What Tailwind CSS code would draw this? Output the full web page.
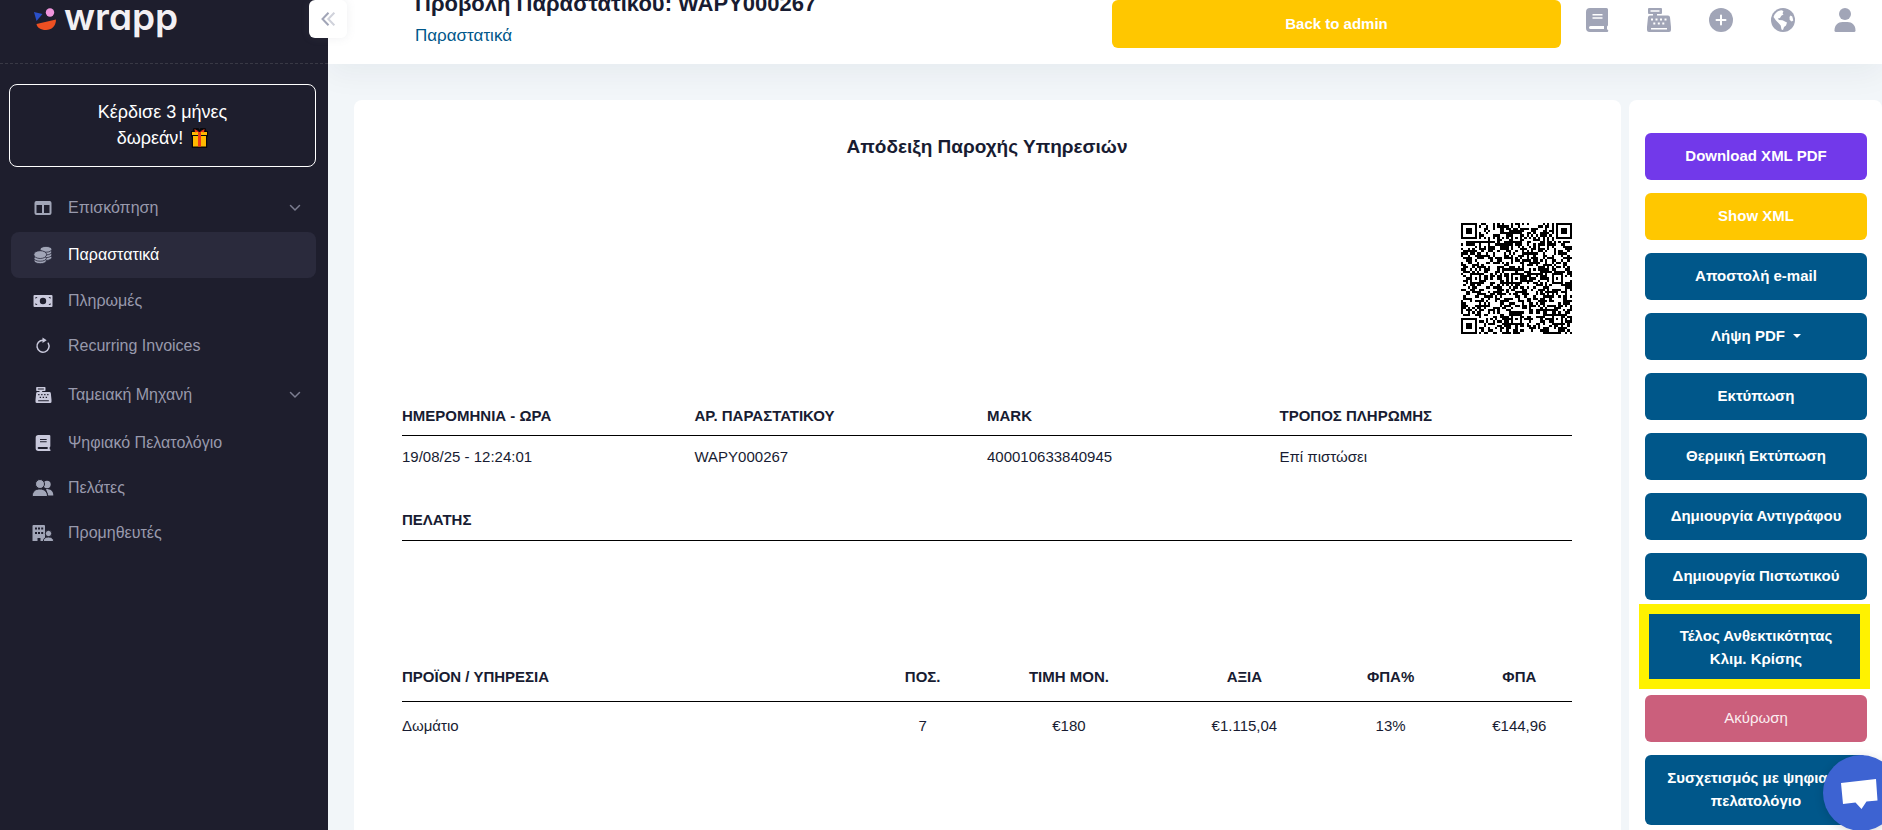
<!DOCTYPE html>
<html lang="el">
<head>
<meta charset="utf-8">
<title>Προβολή Παραστατικού: WAPY000267</title>
<script src="https://cdn.jsdelivr.net/npm/@tailwindcss/browser@4"></script>
</head>
<body class="flex h-screen overflow-hidden bg-[#f2f6f9] font-['Liberation_Sans',Arial,sans-serif] text-[15px] leading-6 text-[#181c32]">

<svg class="hidden" aria-hidden="true">
  <symbol id="book" viewBox="0 0 24 24"><path fill="currentColor" fill-rule="evenodd" d="M5 0h16.500a1.500 1.500 0 0 1 1.500 1.500v15.500a1.500 1.500 0 0 1-1 1.400v3a1.300 1.300 0 0 1 0 2.600H5a4 4 0 0 1-4-4V4a4 4 0 0 1 4-4zM5.500 18a1.500 1.500 0 0 0 0 3H19v-3zM7.500 6v1.500h10V6zm0 3.200v1.500h10V9.200z"/></symbol>
  <symbol id="register" viewBox="0 0 24 24"><path fill="currentColor" fill-rule="evenodd" d="M2 0h12a1 1 0 0 1 1 1v4a1 1 0 0 1-1 1h-4v1.500h11a2 2 0 0 1 2 1.700L24 19v3a2 2 0 0 1-2 2H2a2 2 0 0 1-2-2v-3L1 9.200a2 2 0 0 1 2-1.700h3V6H2a1 1 0 0 1-1-1V1a1 1 0 0 1 1-1zM3.500 2.200v1.600h9V2.200zM4 10.500v2h2v-2zm4.500 0v2h2v-2zm4.500 0v2h2v-2zm4.500 0v2h2v-2zM6.300 14.500v2h2v-2zm4.500 0v2h2v-2zm4.500 0v2h2v-2zM4 20v1.500h16V20z"/></symbol>
  <symbol id="chevron" viewBox="0 0 12 12"><path fill="none" stroke="currentColor" stroke-width="1.500" stroke-linecap="round" d="M1.500 3.500 6 8l4.500-4.500"/></symbol>
</svg>

<aside class="relative z-20 flex w-[328px] shrink-0 flex-col bg-[#1e1e2d]">
  <div class="relative flex h-16 shrink-0 items-start border-b border-dashed border-[#393945] pl-[34px]">
    <a href="#" aria-label="wrapp" class="flex items-start gap-2 text-[#f3f0f3]">
      <svg class="mt-2 h-[22px] w-[22px]" viewBox="0 0 22 22"><path fill="#2b50c8" d="M0 4 8.500 6 2.500 13z"/><circle cx="16" cy="4.500" r="4.200" fill="#f095dd"/><path fill="#ee5022" d="M2.500 16 22 11.500C22 18 17.500 22 12 22S3 19.500 2.500 16z"/></svg>
      <span class="font-['Inter'] text-[37px] font-semibold leading-[34px] [font-feature-settings:'cv11']">wrapp</span>
    </a>
    <button aria-label="Σύμπτυξη μενού" class="absolute -right-[19px] top-0 flex h-[38px] w-[38px] items-center justify-center rounded-md bg-white shadow-[0_0_10px_rgba(113,121,136,.12)]">
      <svg class="h-[14px] w-[14px]" viewBox="0 0 14 14" fill="none" stroke-width="2"><path stroke="#a1a5b7" d="M7.500.7 1.500 7l6 6.300"/><path stroke="#d0d2db" d="M13.300.7 7.300 7l6 6.300"/></svg>
    </button>
  </div>
  <a href="#" class="mt-5 ml-[9px] mr-3 flex h-[83px] shrink-0 flex-col items-center justify-center rounded-lg border border-white pb-[2px] text-[18px] leading-[26px] text-white">
    <span>Κέρδισε 3 μήνες</span>
    <span class="flex items-center gap-2">δωρεάν!
      <svg class="h-5 w-[17px]" viewBox="0 0 17 20" role="img" aria-label="δώρο"><path d="M2.500 0h5l1 2 1-2h5l1 3H17v5l-.8 1V20H.8V9L0 8V3h1.500z" fill="#08080c"/><path fill="#ffb900" d="M1 4h15v3H1zM2 8h13v10.500H2z"/><path fill="#f03a17" d="M7 4h3v14.500H7zM3.500 1 8 3.500 4 4.500zM13.500 1 9 3.500l4 1z"/></svg>
    </span>
  </a>
  <nav class="mt-[18px] ml-[11px] mr-3 flex flex-col text-base text-[#9899ac]">
    <a href="#" class="flex h-[45px] items-center pl-5 pr-[15px]"><svg class="h-6 w-6 text-[#a1a5b7]" viewBox="0 0 24 24"><path fill="currentColor" fill-rule="evenodd" d="M5 5h14a2 2 0 0 1 1.500 2v10a2 2 0 0 1-2 2h-13a2 2 0 0 1-2-2V7A2 2 0 0 1 5 5zm.5 4v8H11V9zm7.500 0v8h5.500V9z"/></svg><span class="ml-[13px] flex-1">Επισκόπηση</span><svg class="h-3 w-3 text-[#7c7d90]"><use href="#chevron"/></svg></a>
    <a href="#" class="mt-[2px] flex h-[46px] items-center rounded-lg bg-[#2a2a3c] pl-5 pr-[15px] text-white"><svg class="h-6 w-6 text-[#a1a5b7]" viewBox="0 0 24 24"><g fill="currentColor" stroke="#2a2a3c" stroke-width=".8"><ellipse cx="15" cy="14.500" rx="5.800" ry="2.900"/><ellipse cx="15" cy="11.700" rx="5.800" ry="2.900"/><ellipse cx="15" cy="9" rx="5.800" ry="2.900"/><ellipse cx="15" cy="6.300" rx="5.800" ry="2.900"/><ellipse cx="9.200" cy="17.800" rx="6.200" ry="2.900"/><ellipse cx="9.200" cy="15.300" rx="6.200" ry="2.900"/><ellipse cx="9.200" cy="11.600" rx="6.400" ry="3.900"/></g></svg><span class="ml-[13px] flex-1">Παραστατικά</span></a>
    <a href="#" class="flex h-[45px] items-center pl-5 pr-[15px]"><svg class="h-6 w-6 text-[#c9c9dc]" viewBox="0 0 24 24"><path fill="currentColor" fill-rule="evenodd" d="M3.500 6h17a1 1 0 0 1 1 1v10a1 1 0 0 1-1 1h-17a1 1 0 0 1-1-1V7a1 1 0 0 1 1-1zM12 8.800a3.200 3.200 0 1 0 0 6.400 3.200 3.200 0 0 0 0-6.400zM4.500 8v2l2-2zm15 0h-2l2 2zm-15 8h2l-2-2zm15 0v-2l-2 2z"/></svg><span class="ml-[13px] flex-1">Πληρωμές</span></a>
    <a href="#" class="flex h-[46px] items-center pl-5 pr-[15px]"><svg class="h-6 w-6 text-[#c9c9dc]" viewBox="0 0 24 24"><path fill="none" stroke="currentColor" stroke-width="1.500" stroke-linecap="round" d="M17.200 9.200a6 6 0 1 1-5.200-3"/><path fill="currentColor" d="m11.500 3.500 4.200 2.800-4.200 2.800z"/></svg><span class="ml-[13px] flex-1">Recurring Invoices</span></a>
    <a href="#" class="mt-[3px] flex h-[45px] items-center pl-5 pr-[15px]"><span class="flex h-6 w-6 items-center justify-center text-[#c9c9dc]"><svg class="h-4 w-[17px]"><use href="#register"/></svg></span><span class="ml-[13px] flex-1">Ταμειακή Μηχανή</span><svg class="h-3 w-3 text-[#7c7d90]"><use href="#chevron"/></svg></a>
    <a href="#" class="mt-[3px] flex h-[45px] items-center pl-5 pr-[15px]"><span class="flex h-6 w-6 items-center justify-center text-[#c9c9dc]"><svg class="h-4 w-4"><use href="#book"/></svg></span><span class="ml-[13px] flex-1">Ψηφιακό Πελατολόγιο</span></a>
    <a href="#" class="flex h-[45px] items-center pl-5 pr-[15px]"><svg class="h-6 w-6 text-[#a1a5b7]" viewBox="0 0 24 24"><g fill="currentColor"><circle cx="16" cy="8.500" r="3.700"/><path d="M15 13c4.500 0 7.300 2 7.300 6.500h-5z"/><g stroke="#1e1e2d" stroke-width="1"><circle cx="9" cy="8" r="4.500"/><path d="M1.200 20.500c0-5 3-7.500 7.600-7.500s7.700 2.500 7.700 7.500z"/></g></g></svg><span class="ml-[13px] flex-1">Πελάτες</span></a>
    <a href="#" class="flex h-[46px] items-center pl-5 pr-[15px]"><svg class="h-6 w-6 text-[#a1a5b7]" viewBox="0 0 24 24"><path fill="currentColor" fill-rule="evenodd" d="M2.500 4H13a1 1 0 0 1 1 1v15H9.500v-3h-3v3h-5V5a1 1 0 0 1 1-1zM4 6.500v2h2v-2zm3 0v2h2v-2zm3.200 0v2h2v-2zM4 11v2h2v-2zm3 0v2h2v-2zm3.200 0v2h2v-2z"/><g fill="currentColor" stroke="#1e1e2d" stroke-width="1"><circle cx="17.500" cy="12.500" r="3.200"/><path d="M12.300 20.500c0-3.200 2-4.500 5.100-4.500s5.200 1.300 5.200 4.500z"/></g></svg><span class="ml-[13px] flex-1">Προμηθευτές</span></a>
  </nav>
</aside>

<div class="flex min-w-0 flex-1 flex-col">
  <header class="relative z-10 flex h-16 shrink-0 bg-white pl-[87px] pr-[25px] shadow-[0_10px_30px_rgba(20,30,50,.05)]">
    <div class="flex flex-1 flex-col justify-end pb-4">
      <h1 class="mb-2 whitespace-nowrap text-[22px] font-bold leading-6">Προβολή Παραστατικού: WAPY000267</h1>
      <a href="#" class="text-[17px] text-[#00578a]">Παραστατικά</a>
    </div>
    <button class="h-12 w-[449px] rounded-md bg-[#ffc700] font-bold text-white">Back to admin</button>
    <div class="ml-6 flex h-10 items-center gap-[38px] text-[#a1a5b7]">
      <button aria-label="Πελατολόγιο"><svg class="h-6 w-6"><use href="#book"/></svg></button>
      <button aria-label="Ταμειακή μηχανή"><svg class="h-6 w-6"><use href="#register"/></svg></button>
      <button aria-label="Προσθήκη"><svg class="h-6 w-6" viewBox="0 0 24 24"><circle cx="12" cy="12" r="12" fill="currentColor"/><path stroke="#fff" stroke-width="2" stroke-linecap="round" d="M12 7.500v9M7.500 12h9"/></svg></button>
      <button aria-label="Γλώσσα"><svg class="h-6 w-6" viewBox="0 0 24 24"><circle cx="12" cy="12" r="12" fill="currentColor"/><path fill="#fff" d="M2.500 9C4 5 7 2.500 11 2.300l1.500 1.200-1 1.700 1 1.300-2.200 1.300L9 10l-2.200.6L8 12l3.500.2L16 14.500l-1 3-2 1.500-1 3-1.500-.5-.8-4L7.500 15 5 12.500zM19.500 7.500l1.800 1 1 4-1.600 1-2-1.500-.2-3z"/></svg></button>
      <button aria-label="Λογαριασμός"><svg class="h-6 w-6" viewBox="0 0 24 24"><g fill="currentColor"><circle cx="12" cy="6" r="6"/><path d="M1.500 22.500C1.500 17 5 14 9.500 14h5c4.500 0 8 3 8 8.500a1.500 1.500 0 0 1-1.500 1.500H3a1.500 1.500 0 0 1-1.500-1.500z"/></g></svg></button>
    </div>
  </header>

  <main class="flex min-h-0 flex-1 gap-2 pl-[26px] pt-9">
    <section class="min-w-0 flex-1 rounded-t-lg bg-white pl-12 pr-[49px] pt-8">
      <h2 class="text-center text-[19px] font-bold leading-[30px]">Απόδειξη Παροχής Υπηρεσιών</h2>
      <div class="mt-[61px] flex justify-end">
        <svg id="qr" class="h-[111px] w-[111px]" viewBox="0 0 49 49" shape-rendering="crispEdges" role="img" aria-label="QR"><path fill="#000" d=""/></svg>
      </div>
      <table class="mt-[70px] w-full table-fixed text-left">
        <thead><tr class="border-b border-black"><th class="pb-[7px]">ΗΜΕΡΟΜΗΝΙΑ - ΩΡΑ</th><th class="pb-[7px]">ΑΡ. ΠΑΡΑΣΤΑΤΙΚΟΥ</th><th class="pb-[7px]">MARK</th><th class="pb-[7px]">ΤΡΟΠΟΣ ΠΛΗΡΩΜΗΣ</th></tr></thead>
        <tbody><tr><td class="pt-[9px]">19/08/25 - 12:24:01</td><td class="pt-[9px]">WAPY000267</td><td class="pt-[9px]">400010633840945</td><td class="pt-[9px]">Επί πιστώσει</td></tr></tbody>
      </table>
      <h3 class="mt-[39px] border-b border-black pb-2 font-bold">ΠΕΛΑΤΗΣ</h3>
      <table class="mt-[124px] w-full table-fixed text-center">
        <colgroup><col class="w-[41%]"><col class="w-[7%]"><col class="w-[18%]"><col class="w-[12%]"><col class="w-[13%]"><col class="w-[9%]"></colgroup>
        <thead><tr class="border-b border-black"><th class="pb-3 text-left">ΠΡΟΪΟΝ / ΥΠΗΡΕΣΙΑ</th><th class="pb-3">ΠΟΣ.</th><th class="pb-3">ΤΙΜΗ ΜΟΝ.</th><th class="pb-3">ΑΞΙΑ</th><th class="pb-3">ΦΠΑ%</th><th class="pb-3">ΦΠΑ</th></tr></thead>
        <tbody><tr><td class="pt-3 text-left">Δωμάτιο</td><td class="pt-3">7</td><td class="pt-3">€180</td><td class="pt-3">€1.115,04</td><td class="pt-3">13%</td><td class="pt-3">€144,96</td></tr></tbody>
      </table>
    </section>

    <section class="flex w-[253px] shrink-0 flex-col gap-[13px] rounded-t-lg bg-white pl-4 pr-[15px] pt-[33px] leading-[23px]">
      <button class="rounded-md bg-[#7239ea] px-4 pb-[13px] pt-[11px] font-bold text-white">Download XML PDF</button>
      <button class="rounded-md bg-[#ffc700] px-4 pb-[13px] pt-[11px] font-bold text-white">Show XML</button>
      <button class="rounded-md bg-[#00578a] px-4 pb-[13px] pt-[11px] font-bold text-white">Αποστολή e-mail</button>
      <button class="flex items-center justify-center gap-2 rounded-md bg-[#00578a] px-4 pb-[13px] pt-[11px] font-bold text-white">Λήψη PDF <span class="border-x-4 border-t-4 border-x-transparent border-t-white"></span></button>
      <button class="rounded-md bg-[#00578a] px-4 pb-[13px] pt-[11px] font-bold text-white">Εκτύπωση</button>
      <button class="rounded-md bg-[#00578a] px-4 pb-[13px] pt-[11px] font-bold text-white">Θερμική Εκτύπωση</button>
      <button class="rounded-md bg-[#00578a] px-4 pb-[13px] pt-[11px] font-bold text-white">Δημιουργία Αντιγράφου</button>
      <button class="rounded-md bg-[#00578a] px-4 pb-[13px] pt-[11px] font-bold text-white">Δημιουργία Πιστωτικού</button>
      <button class="relative rounded-md bg-[#00578a] px-4 pb-3 pt-[11px] font-bold text-white">Τέλος Ανθεκτικότητας Κλιμ. Κρίσης<span class="absolute -bottom-[7px] -left-[6px] -right-[3px] -top-[9px] border-[10px] border-[#fff200]"></span></button>
      <button class="rounded-md bg-[#cb5f7c] px-4 pb-[13px] pt-[11px] text-[#fbeef1]">Ακύρωση</button>
      <button class="rounded-md bg-[#00578a] px-4 pb-[13px] pt-[11px] font-bold text-white">Συσχετισμός με ψηφιακό πελατολόγιο</button>
    </section>
  </main>
</div>

<button aria-label="Συνομιλία" class="fixed -right-[17px] bottom-[-1px] z-30 h-[76px] w-[76px] rounded-full bg-[#3d63d2] shadow-[0_2px_10px_rgba(0,0,0,.15)]">
  <svg class="h-full w-full" viewBox="0 0 76 76"><path fill="#fff" d="m18 28 35-4 1.500 21.500-11 1L38.500 54l-6-6.500L20 49z"/></svg>
</button>

<script>
// Draws a 49x49 code: finder, alignment and timing patterns, with the data cells filled from a seeded sequence.
(function () {
  var n = 49, d = "", seed = 267;
  function ring(dx, dy) { return Math.max(Math.abs(dx), Math.abs(dy)); }
  function cell(x, y) {
    var f = [[3, 3], [n - 4, 3], [3, n - 4]], i, k;
    for (i = 0; i < 3; i++) { k = ring(x - f[i][0], y - f[i][1]); if (k <= 4) return k !== 2 && k !== 4; }
    var a = [[24, 6], [6, 24], [24, 24], [42, 24], [24, 42], [42, 42]];
    for (i = 0; i < 6; i++) { k = ring(x - a[i][0], y - a[i][1]); if (k <= 2) return k !== 1; }
    if (x === 6 || y === 6) return (x + y) % 2 === 0;
    seed = (seed * 1103515245 + 12345) % 2147483648;
    return (seed >> 12) % 100 < 51;
  }
  for (var y = 0; y < n; y++) for (var x = 0; x < n; x++) if (cell(x, y)) d += "M" + x + " " + y + "h1v1h-1z";
  document.querySelector("#qr path").setAttribute("d", d);
})();
</script>
</body>
</html>
